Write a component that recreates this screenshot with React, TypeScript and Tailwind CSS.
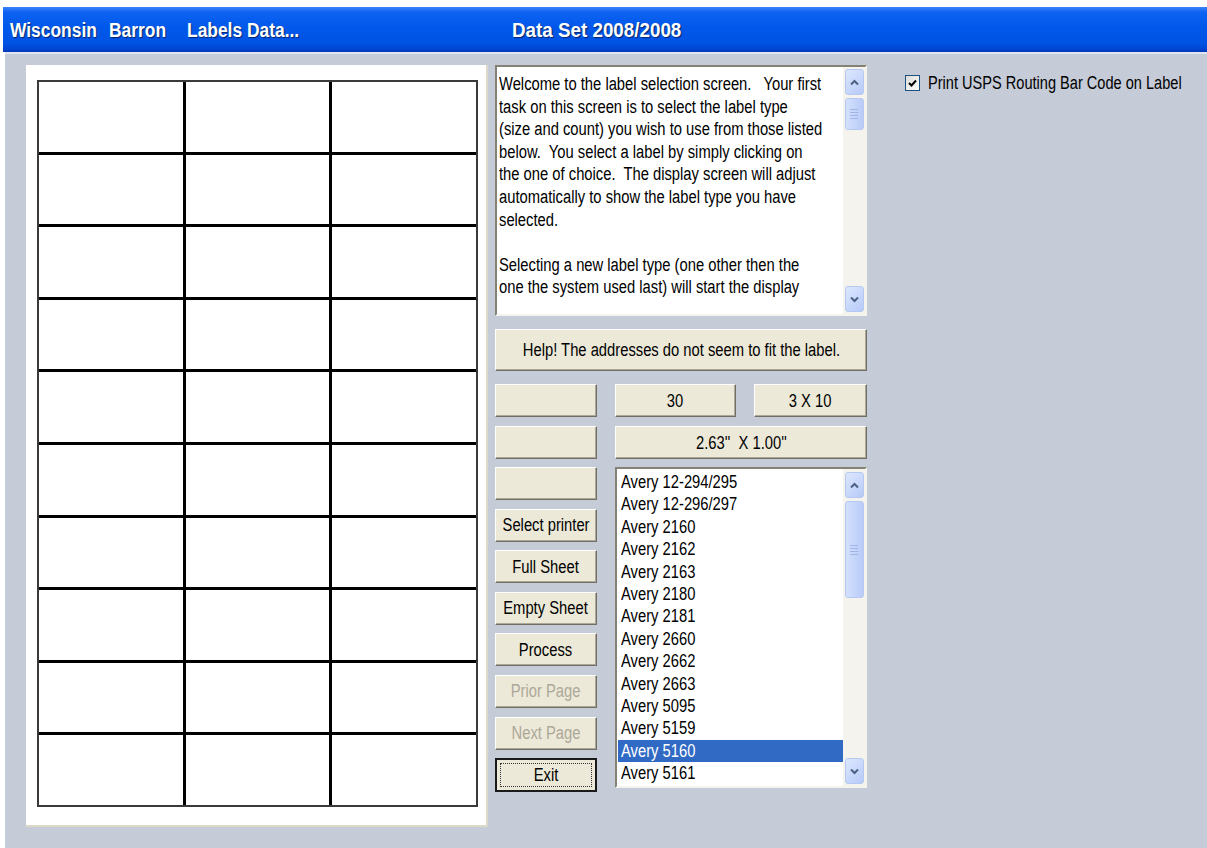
import React from "react";

const AVERY = [
  "Avery 12-294/295",
  "Avery 12-296/297",
  "Avery 2160",
  "Avery 2162",
  "Avery 2163",
  "Avery 2180",
  "Avery 2181",
  "Avery 2660",
  "Avery 2662",
  "Avery 2663",
  "Avery 5095",
  "Avery 5159",
  "Avery 5160",
  "Avery 5161",
];

const WELCOME = [
  "Welcome to the label selection screen.   Your first",
  "task on this screen is to select the label type",
  "(size and count) you wish to use from those listed",
  "below.  You select a label by simply clicking on",
  "the one of choice.  The display screen will adjust",
  "automatically to show the label type you have",
  "selected.",
  "",
  "Selecting a new label type (one other then the",
  "one the system used last) will start the display",
];

// Narrow face: the regular sans squeezed horizontally, like the old dialog font
function Narrow({
  children,
  left = false,
}: {
  children: React.ReactNode;
  left?: boolean;
}) {
  return (
    <span
      className={`inline-block whitespace-pre scale-x-[0.82] ${
        left ? "origin-left" : "origin-center"
      }`}
    >
      {children}
    </span>
  );
}

function Chevron({ up }: { up: boolean }) {
  return (
    <svg width="9" height="7" viewBox="0 0 9 7">
      <path
        d={up ? "M1 5.5 L4.5 2 L8 5.5" : "M1 1.5 L4.5 5 L8 1.5"}
        fill="none"
        stroke="#4d6185"
        strokeWidth="2"
      />
    </svg>
  );
}

function ScrollButton({ up }: { up: boolean }) {
  return (
    <div className="h-[26px] w-[19px] shrink-0 rounded-[3px] border border-[#b5c9f3] bg-[linear-gradient(135deg,#dde7fd_0%,#c6d6fb_60%,#b6c9f6_100%)] flex items-center justify-center">
      <Chevron up={up} />
    </div>
  );
}

function Thumb({ h }: { h: string }) {
  return (
    <div
      className={`${h} w-[19px] mt-[3px] shrink-0 rounded-[3px] border border-[#b5c9f3] bg-[linear-gradient(90deg,#d4e0fc_0%,#c6d6fb_50%,#b9cbf7_100%)] flex flex-col items-center justify-center gap-[2px]`}
    >
      <div className="w-[8px] h-px bg-[#9fb5e6]" />
      <div className="w-[8px] h-px bg-[#9fb5e6]" />
      <div className="w-[8px] h-px bg-[#9fb5e6]" />
      <div className="w-[8px] h-px bg-[#9fb5e6]" />
    </div>
  );
}

function Button({
  children,
  className = "",
  disabled = false,
}: {
  children?: React.ReactNode;
  className?: string;
  disabled?: boolean;
}) {
  return (
    <div
      className={`h-[33px] shrink-0 bg-[#ece9d8] border border-t-white border-l-white border-r-[#716f64] border-b-[#716f64] shadow-[inset_-1px_-1px_0_#aca899] flex items-center justify-center overflow-hidden text-[18px] leading-none ${
        disabled ? "text-[#aca899]" : "text-black"
      } ${className}`}
    >
      {children ? <Narrow>{children}</Narrow> : null}
    </div>
  );
}

function TitleWord({
  w,
  children,
  wide = false,
}: {
  w: string;
  children: React.ReactNode;
  wide?: boolean;
}) {
  return (
    <span className={`${w} shrink-0 inline-block`}>
      <span
        className={`inline-block whitespace-pre origin-left ${
          wide ? "scale-x-[0.94]" : "scale-x-[0.87]"
        }`}
      >
        {children}
      </span>
    </span>
  );
}

export default function App() {
  return (
    <div className="w-[1207px] h-[848px] bg-white overflow-hidden font-['Liberation_Sans',Arial,sans-serif]">
      {/* caption bar */}
      <div className="mt-[7px] ml-[3px] h-[45px] bg-[linear-gradient(to_bottom,#3a82f8_0%,#0d62f2_12%,#0058ea_45%,#0053e4_80%,#0046d2_93%,#0036b8_100%)] flex items-center pl-[7px] text-white font-bold text-[20px] [text-shadow:1px_1px_1px_#0a246a]">
        <TitleWord w="w-[99px]">Wisconsin</TitleWord>
        <TitleWord w="w-[78px]">Barron</TitleWord>
        <TitleWord w="w-[325px]">Labels Data...</TitleWord>
        <TitleWord w="w-[200px]" wide>
          Data Set 2008/2008
        </TitleWord>
      </div>
      <div className="ml-[5px] h-[2px] bg-[#dfe5f0]" />

      {/* client area */}
      <div className="ml-[5px] h-[794px] bg-[#c5cbd7] flex pt-[11px] pl-[21px]">
        {/* label sheet preview */}
        <div className="w-[462px] h-[762px] shrink-0 bg-white border-r-2 border-b-2 border-r-[#ddd9c8] border-b-[#ddd9c8] pt-[15px] pl-[11px]">
          <div className="w-[441px] h-[727px] border-2 border-[#3a3a3a] bg-black grid grid-cols-3 grid-rows-10 gap-[3px]">
            {Array.from({ length: 30 }).map((_, i) => (
              <div key={i} className="bg-white" />
            ))}
          </div>
        </div>

        {/* controls */}
        <div className="ml-[7px] w-[372px] shrink-0 flex flex-col">
          {/* help text */}
          <div className="h-[251px] border-2 border-t-[#848275] border-l-[#848275] border-r-[#f4f3ee] border-b-[#f4f3ee] bg-white flex">
            <div className="flex-1 min-w-0 overflow-hidden pl-[2px] pt-[6px] text-[18px] leading-[22.6px] text-black">
              {WELCOME.map((l, i) => (
                <div key={i} className="h-[22.6px]">
                  <Narrow left>{l}</Narrow>
                </div>
              ))}
            </div>
            <div className="w-[22px] shrink-0 bg-[#f4f3ee] flex flex-col items-center pt-[2px] pb-[2px]">
              <ScrollButton up />
              <Thumb h="h-[32px]" />
              <div className="flex-1" />
              <ScrollButton up={false} />
            </div>
          </div>

          <Button className="mt-[13px] !h-[42px]">
            Help! The addresses do not seem to fit the label.
          </Button>

          <div className="mt-[13px] flex flex-col gap-[9px]">
            <div className="flex">
              <Button className="w-[102px]" />
              <Button className="ml-[18px] w-[121px]">30</Button>
              <Button className="ml-[18px] w-[113px]">3 X 10</Button>
            </div>
            <div className="flex">
              <Button className="w-[102px]" />
              <Button className="ml-[18px] w-[252px]">{"2.63''  X 1.00''"}</Button>
            </div>
          </div>

          <div className="mt-[8px] flex">
            <div className="w-[102px] shrink-0 flex flex-col gap-[8.6px]">
              <Button />
              <Button>Select printer</Button>
              <Button>Full Sheet</Button>
              <Button>Empty Sheet</Button>
              <Button>Process</Button>
              <Button disabled>Prior Page</Button>
              <Button disabled>Next Page</Button>
              <div className="h-[34px] border-2 border-[#1a1a1a] bg-[#ece9d8] p-[3px]">
                <div className="h-full border border-dotted border-[#333] flex items-center justify-center text-[18px] leading-none text-black">
                  <Narrow>Exit</Narrow>
                </div>
              </div>
            </div>

            {/* label stock list */}
            <div className="ml-[18px] w-[252px] h-[321px] shrink-0 border-2 border-t-[#848275] border-l-[#848275] border-r-[#f4f3ee] border-b-[#f4f3ee] bg-white flex">
              <div className="flex-1 min-w-0 overflow-hidden pt-[2px] pl-[1px] text-[18px] leading-[22.4px] text-black">
                {AVERY.map((a) => (
                  <div
                    key={a}
                    className={`h-[22.4px] pl-[3px] ${
                      a === "Avery 5160" ? "bg-[#316ac5] text-white" : ""
                    }`}
                  >
                    <Narrow left>{a}</Narrow>
                  </div>
                ))}
              </div>
              <div className="w-[22px] shrink-0 bg-[#f4f3ee] flex flex-col items-center pt-[3px] pb-[2px]">
                <ScrollButton up />
                <Thumb h="h-[97px]" />
                <div className="flex-1" />
                <ScrollButton up={false} />
              </div>
            </div>
          </div>
        </div>

        {/* options */}
        <div className="ml-[38px] mt-[7px] flex items-start shrink-0">
          <div className="mt-[3px] w-[15px] h-[16px] border border-[#1c5180] bg-[linear-gradient(135deg,#dcdbd5,#ffffff)] flex items-center justify-center">
            <svg width="9" height="9" viewBox="0 0 9 9">
              <path d="M1 4 L3.5 6.5 L8 1.5" fill="none" stroke="#000" strokeWidth="2" />
            </svg>
          </div>
          <span className="ml-[8px] text-[18px] leading-[22px] text-black">
            <span className="inline-block whitespace-pre origin-left scale-x-[0.81]">
              Print USPS Routing Bar Code on Label
            </span>
          </span>
        </div>
      </div>
    </div>
  );
}
